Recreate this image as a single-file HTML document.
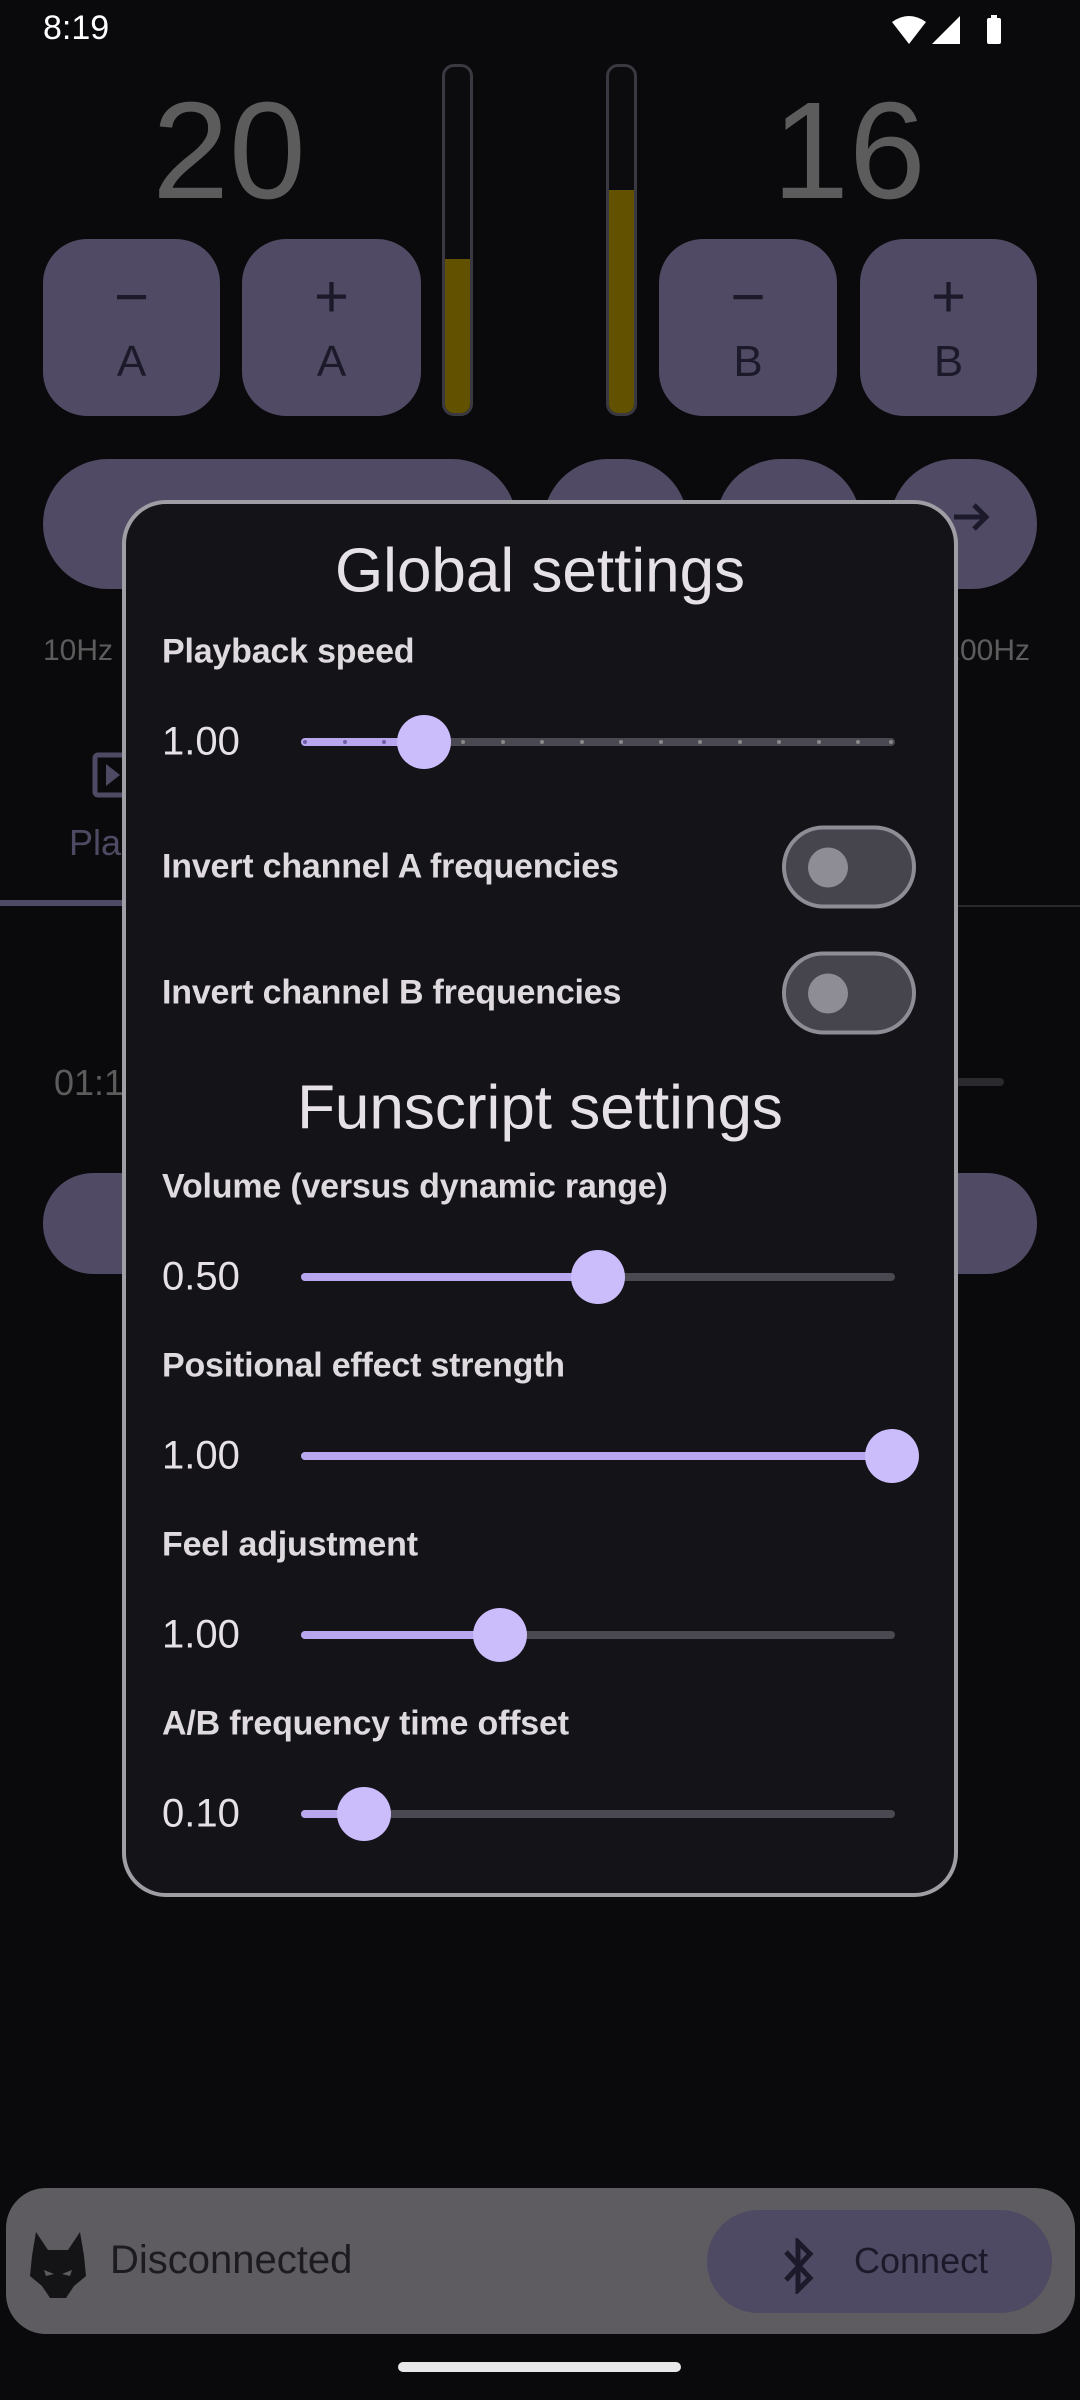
<!DOCTYPE html>
<html><head><meta charset="utf-8"><style>
*{margin:0;padding:0;box-sizing:border-box}
body{width:1080px;height:2400px;background:#0a0a0c;position:relative;overflow:hidden;font-family:"Liberation Sans",sans-serif}
.a{position:absolute}
.btn{position:absolute;background:#504a64;border-radius:44px;color:#1c1a2a;text-align:center}
.btn .s{font-size:60px;line-height:60px;margin-top:28px}
.btn .l{font-size:44px;line-height:50px;margin-top:10px}
.big{position:absolute;font-size:138px;color:#5c5c5c;line-height:1;text-align:center;width:300px}
.bar{position:absolute;width:31px;border:3px solid #3a3840;border-radius:12px;background:#0c0c0e;overflow:hidden}
.bar div{position:absolute;left:0;right:0;bottom:0;background:#625200}
.lbl{position:absolute;left:162px;font-size:34px;font-weight:bold;color:#dedade;transform:translateY(-50%);letter-spacing:-0.2px}
.val{position:absolute;left:162px;font-size:40px;color:#e6e1e6;transform:translateY(-50%)}
.trk{position:absolute;left:301px;width:594px;height:8px;border-radius:4px;background:#4a4850;transform:translateY(-50%)}
.act{position:absolute;left:0;top:0;bottom:0;background:#b8a6ee;border-radius:4px}
.thumb{position:absolute;width:54px;height:54px;border-radius:50%;background:#cbbcfc;transform:translate(-50%,-50%)}
.tog{position:absolute;left:782px;width:134px;height:83px;border:4px solid #8e8c95;border-radius:42px;background:#46444c;transform:translateY(-50%)}
.tog div{position:absolute;left:22px;top:18px;width:40px;height:40px;border-radius:50%;background:#8e8c95}
.h{position:absolute;left:122px;width:836px;text-align:center;font-size:62px;color:#e6e1e6;transform:translateY(-50%)}
.dot{position:absolute;width:4px;height:4px;border-radius:50%;top:2px}
</style></head><body>
<div class="a" style="left:43px;top:9px;font-size:34px;color:#fff">8:19</div>
<svg class="a" style="left:890px;top:14px" width="120" height="34" viewBox="0 0 120 34">
<path d="M2 8 Q19 -4 36 8 L19 30 Z" fill="#fff"/>
<path d="M42 30 L70 2 L70 30 Z" fill="#fff"/>
<rect x="97" y="4" width="14" height="26" rx="2" fill="#fff"/><rect x="101" y="1" width="6" height="4" fill="#fff"/>
</svg>
<div class="big" style="left:79px;top:82px">20</div>
<div class="big" style="left:699px;top:82px">16</div>
<div class="bar" style="left:442px;top:64px;height:352px"><div style="height:154px"></div></div>
<div class="bar" style="left:606px;top:64px;height:352px"><div style="height:223px"></div></div>
<div class="btn" style="left:43px;top:239px;width:177px;height:177px"><div class="s">−</div><div class="l">A</div></div>
<div class="btn" style="left:242px;top:239px;width:179px;height:177px"><div class="s">+</div><div class="l">A</div></div>
<div class="btn" style="left:659px;top:239px;width:178px;height:177px"><div class="s">−</div><div class="l">B</div></div>
<div class="btn" style="left:860px;top:239px;width:177px;height:177px"><div class="s">+</div><div class="l">B</div></div>
<div class="btn" style="left:43px;top:459px;width:474px;height:130px;border-radius:65px"></div>
<div class="btn" style="left:543px;top:459px;width:145px;height:130px;border-radius:65px"></div>
<div class="btn" style="left:716px;top:459px;width:145px;height:130px;border-radius:65px"></div>
<div class="btn" style="left:890px;top:459px;width:147px;height:130px;border-radius:65px"></div>
<svg class="a" style="left:950px;top:500px" width="44" height="34"><path d="M4 17 H36 M24 5 L36 17 L24 29" stroke="#1c1a2a" stroke-width="5" fill="none"/></svg>
<div class="a" style="left:43px;top:634px;font-size:30px;color:#5c5c5c">10Hz</div>
<div class="a" style="right:50px;top:634px;font-size:30px;color:#5c5c5c">200Hz</div>
<svg class="a" style="left:92px;top:752px" width="40" height="48"><rect x="3" y="3" width="34" height="40" rx="3" stroke="#4f4a63" stroke-width="5" fill="none"/><path d="M14 12 L28 23 L14 34Z" fill="#4f4a63"/></svg>
<div class="a" style="left:69px;top:822px;font-size:36px;color:#4f4a63">Pla</div>
<div class="a" style="left:0;top:900px;width:125px;height:6px;background:#4f4a63"></div>
<div class="a" style="left:125px;top:905px;width:955px;height:2px;background:#2a292e"></div>
<div class="a" style="left:54px;top:1062px;font-size:36px;color:#5c5c5c">01:1</div>
<div class="a" style="left:940px;top:1078px;width:64px;height:8px;border-radius:4px;background:#2a292e"></div>
<div class="btn" style="left:43px;top:1173px;width:994px;height:101px;border-radius:50px"></div>
<div class="a" style="left:122px;top:500px;width:836px;height:1397px;background:#131318;border:4px solid #a09ea5;border-radius:44px"></div>
<div class="h" style="top:571px">Global settings</div>
<div class="lbl" style="top:652px">Playback speed</div>
<div class="val" style="top:742px">1.00</div>
<div class="trk" style="top:742px"><div class="act" style="width:123px"></div>
<div class="dot" style="left:2px;background:#6e5fa8"></div><div class="dot" style="left:42px;background:#6e5fa8"></div><div class="dot" style="left:81px;background:#6e5fa8"></div>
<div class="dot" style="left:121px;background:#888"></div><div class="dot" style="left:160px;background:#888"></div><div class="dot" style="left:200px;background:#888"></div><div class="dot" style="left:239px;background:#888"></div><div class="dot" style="left:279px;background:#888"></div><div class="dot" style="left:318px;background:#888"></div><div class="dot" style="left:358px;background:#888"></div><div class="dot" style="left:397px;background:#888"></div><div class="dot" style="left:437px;background:#888"></div><div class="dot" style="left:476px;background:#888"></div><div class="dot" style="left:516px;background:#888"></div><div class="dot" style="left:555px;background:#888"></div><div class="dot" style="left:588px;background:#888"></div>
</div>
<div class="thumb" style="left:424px;top:742px"></div>
<div class="lbl" style="top:867px">Invert channel A frequencies</div>
<div class="tog" style="top:867px"><div></div></div>
<div class="lbl" style="top:993px">Invert channel B frequencies</div>
<div class="tog" style="top:993px"><div></div></div>
<div class="h" style="top:1108px">Funscript settings</div>
<div class="lbl" style="top:1187px">Volume (versus dynamic range)</div>
<div class="val" style="top:1277px">0.50</div>
<div class="trk" style="top:1277px"><div class="act" style="width:297px"></div></div>
<div class="thumb" style="left:598px;top:1277px"></div>
<div class="lbl" style="top:1366px">Positional effect strength</div>
<div class="val" style="top:1456px">1.00</div>
<div class="trk" style="top:1456px"><div class="act" style="width:594px"></div></div>
<div class="thumb" style="left:892px;top:1456px"></div>
<div class="lbl" style="top:1545px">Feel adjustment</div>
<div class="val" style="top:1635px">1.00</div>
<div class="trk" style="top:1635px"><div class="act" style="width:199px"></div></div>
<div class="thumb" style="left:500px;top:1635px"></div>
<div class="lbl" style="top:1724px">A/B frequency time offset</div>
<div class="val" style="top:1814px">0.10</div>
<div class="trk" style="top:1814px"><div class="act" style="width:63px"></div></div>
<div class="thumb" style="left:364px;top:1814px"></div>
<div class="a" style="left:6px;top:2188px;width:1069px;height:146px;background:#5e5c60;border-radius:40px"></div>
<svg class="a" style="left:28px;top:2232px" width="60" height="68" viewBox="0 0 60 68"><path d="M8 0 L20 18 L40 18 L52 0 L56 24 L58 44 L46 54 L38 66 L22 66 L14 54 L2 44 L4 24 Z" fill="#141316"/><path d="M16 38 L26 42 L18 44Z M44 38 L34 42 L42 44Z" fill="#5e5c60"/></svg>
<div class="a" style="left:110px;top:2238px;font-size:40px;color:#1c1b1f">Disconnected</div>
<div class="a" style="left:707px;top:2210px;width:345px;height:103px;background:#4f4a63;border-radius:52px"></div>
<svg class="a" style="left:782px;top:2238px" width="34" height="56" viewBox="0 0 34 56"><path d="M4 14 L28 40 L16 52 L16 4 L28 16 L4 42" stroke="#1c1a2a" stroke-width="5" fill="none"/></svg>
<div class="a" style="left:854px;top:2240px;font-size:36px;color:#1c1a2a">Connect</div>
<div class="a" style="left:398px;top:2362px;width:283px;height:10px;border-radius:5px;background:#e8e8e8"></div>
</body></html>
